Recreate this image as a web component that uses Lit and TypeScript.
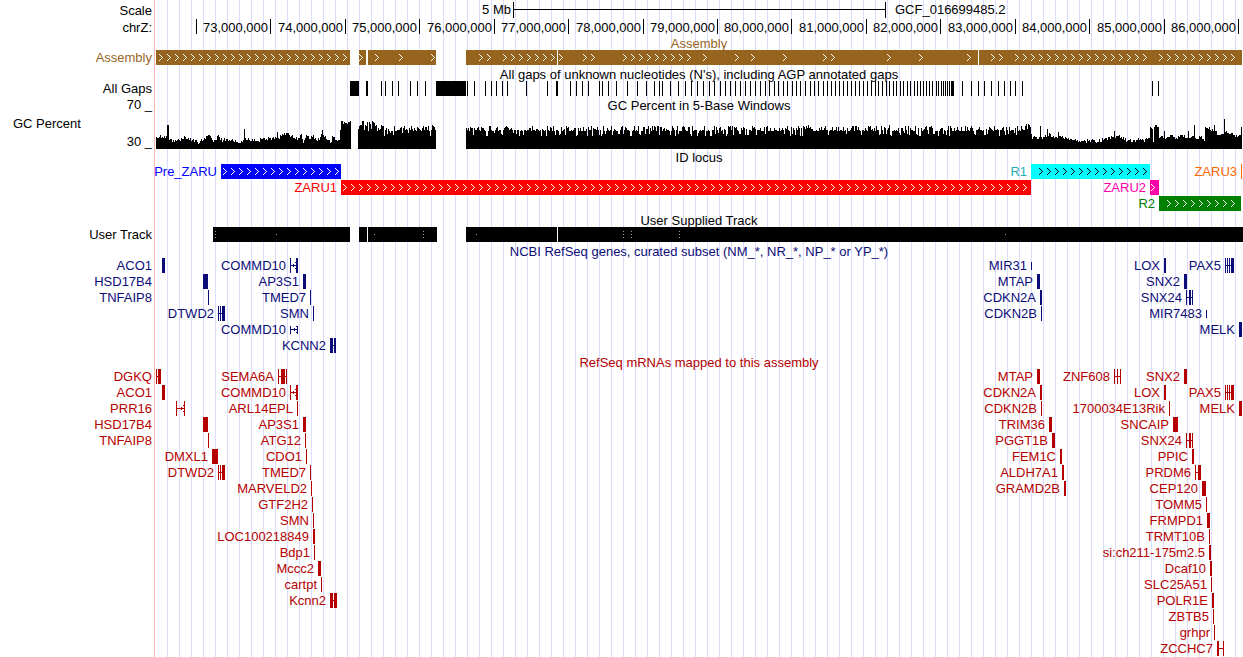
import { LitElement, html, svg, css, nothing } from "lit";
import { customElement, property } from "lit/decorators.js";
import { styleMap } from "lit/directives/style-map.js";

/* The visible window of the chromosome, in bins. */
const VIEW_START = 155;
const VIEW_SPAN = 1088;
const ARROW_STEP = 8;
const ARROW_PHASE = 159;

type Block = [start: number, width: number];

interface Feature {
  name: string;
  blocks: Block[];
  color?: string;
  labelColor?: string;
  arrows?: number[];
  arrowColor?: string;
  gutter?: boolean;
  /** Non-coding items are drawn at half height. */
  thin?: boolean;
  /** Intron strand mark, pointing left. */
  reverse?: number;
}

const percent = (x: number) => `${((x - VIEW_START) / VIEW_SPAN) * 100}%`;

/** Arrow positions on the common arrow grid between two bins, inclusive. */
const arrowsBetween = (from: number, to: number): number[] => {
  const out: number[] = [];
  let x = ARROW_PHASE + Math.ceil((from - ARROW_PHASE) / ARROW_STEP) * ARROW_STEP;
  for (; x <= to; x += ARROW_STEP) out.push(x);
  return out;
};

const f = (name: string, blocks: Block[], extra: Partial<Feature> = {}): Feature => ({
  name,
  blocks,
  ...extra,
});
const left = { gutter: true };

/* ---------- data ---------- */

const ASSEMBLY: Block[] = [[156, 194], [359, 7], [368, 68], [466, 91], [558, 420], [979, 263]];
const ASSEMBLY_ARROWS = [
  ...arrowsBetween(159, 343), 359, 375, 399, 431, 479, 487,
  ...arrowsBetween(503, 551), 559, 583, 591,
  ...arrowsBetween(623, 687), 703, 735, 751, 783, 823, 831, 887, 919, 967, 991, 999,
  ...arrowsBetween(1015, 1143), ...arrowsBetween(1159, 1231),
];

const GAP_BLOCKS: Block[] = [[350, 9], [366, 2], [436, 30], [556, 2], [951, 3]];
const GAPS = [
  381, 385, 392, 398, 410, 417, 425, 467, 474, 485, 491, 496, 502, 507, 526, 547, 570, 576, 582,
  588, 599, 602, 608, 616, 627, 637, 646, 654, 659, 662, 670, 678, 685, 691, 697, 703, 709, 714,
  720, 725, 730, 735, 740, 745, 750, 755, 760, 765, 769, 774, 778, 783, 787, 792, 796, 800, 805,
  810, 814, 818, 823, 827, 831, 835, 839, 843, 847, 851, 855, 859, 863, 867, 871, 875, 878, 882,
  886, 889, 893, 896, 900, 903, 907, 910, 914, 917, 920, 923, 926, 929, 932, 936, 938, 941, 943,
  945, 947, 949, 962, 971, 978, 984, 991, 998, 1004, 1010, 1015, 1022, 1152, 1158,
];

/* GC curve: control points of the sparse regions, as [bin, height]. */
const GC_LEFT: Block[] = [
  [156, 12], [160, 14], [163, 11], [166, 13], [167, 24], [168, 24], [169, 9], [176, 8], [182, 10],
  [184, 13], [186, 10], [192, 9], [197, 7], [203, 9], [206, 13], [210, 13], [213, 7], [216, 9],
  [218, 14], [220, 9], [227, 10], [236, 7], [243, 9], [244, 20], [245, 11], [249, 9], [255, 8],
  [262, 10], [270, 11], [276, 11], [277, 17], [278, 11], [281, 13], [287, 16], [290, 12],
  [298, 11], [301, 15], [303, 6], [306, 14], [309, 10], [313, 14], [314, 10], [319, 9],
  [322, 19], [323, 14], [326, 10], [331, 7], [332, 13], [335, 9], [339, 9], [340, 19],
  [341, 28], [343, 25], [346, 26], [350, 28],
];
const GC_RIGHT: Block[] = [
  [1025, 23], [1026, 25], [1027, 20], [1028, 25], [1030, 22], [1032, 10], [1039, 12], [1040, 23],
  [1041, 12], [1046, 12], [1047, 20], [1048, 13], [1049, 16], [1051, 12], [1057, 11], [1058, 17],
  [1059, 13], [1067, 10], [1074, 9], [1080, 7], [1093, 9], [1097, 7], [1103, 9], [1113, 12],
  [1114, 18], [1115, 11], [1121, 12], [1127, 8], [1136, 9], [1143, 9], [1149, 11], [1150, 22],
  [1152, 20], [1153, 7], [1154, 22], [1158, 22], [1159, 11], [1163, 11], [1164, 18], [1165, 10],
  [1171, 14], [1176, 11], [1182, 14], [1187, 11], [1188, 18], [1189, 11], [1193, 13], [1194, 24],
  [1195, 11], [1200, 12], [1204, 8], [1205, 22], [1209, 22], [1211, 18], [1213, 18], [1214, 24],
  [1215, 18], [1218, 14], [1223, 15], [1224, 30], [1225, 17], [1233, 14], [1238, 13], [1240, 14],
  [1241, 22],
];

const LOCI: Feature[][] = [
  [
    f("Pre_ZARU", [[221, 120]], { color: "#0000ff", arrows: arrowsBetween(223, 335) }),
    f("R1", [[1031, 119]], {
      color: "#00ffff", labelColor: "#1fb0b0", arrowColor: "#000000",
      arrows: arrowsBetween(1039, 1143),
    }),
    f("ZARU3", [[1241, 1]], { color: "#ff6600" }),
  ],
  [
    f("ZARU1", [[341, 690]], { color: "#ff0000", arrows: arrowsBetween(343, 1025) }),
    f("ZARU2", [[1150, 9]], { color: "#ff00aa", arrows: [1151] }),
  ],
  [f("R2", [[1159, 82]], { color: "#008000", arrows: arrowsBetween(1167, 1231) })],
];

const USER_BLOCKS: Block[] = [[213, 137], [359, 8], [368, 69], [466, 91], [558, 685]];
const USER_MARKS: [number, number[]][] = [
  [215, [4, 7, 10]], [276, [7]], [374, [7]], [423, [4, 7, 10]], [476, [7]],
  [623, [4, 7, 10]], [631, [4, 7, 10]], [679, [4, 7, 10]], [1005, [7]],
];

const COMMD10 = f("COMMD10", [[290, 1], [296, 2]], { reverse: 292 });
const PAX5 = f("PAX5", [[1225, 1], [1227, 1], [1229, 1], [1231, 3]]);
const SNX24 = f("SNX24", [[1186, 1], [1189, 2], [1192, 1]]);
const DTWD2 = f("DTWD2", [[218, 1], [220, 1], [222, 3]]);

const CURATED: Feature[][] = [
  [f("ACO1", [[162, 3]], left), COMMD10, f("MIR31", [[1031, 1]], { thin: true }), f("LOX", [[1164, 2]]), PAX5],
  [f("HSD17B4", [[203, 5]], left), f("AP3S1", [[303, 3]]), f("MTAP", [[1037, 3]]), f("SNX2", [[1184, 3]])],
  [f("TNFAIP8", [[208, 1]], left), f("TMED7", [[310, 1]]), f("CDKN2A", [[1040, 2]]), SNX24],
  [DTWD2, f("SMN", [[313, 1]]), f("CDKN2B", [[1041, 1]]), f("MIR7483", [[1206, 1]], { thin: true })],
  [f("COMMD10", [[290, 1], [297, 1]], { reverse: 293, thin: true }), f("MELK", [[1239, 3]])],
  [f("KCNN2", [[330, 3], [334, 2]])],
];

const MAPPED: Feature[][] = [
  [
    f("DGKQ", [[156, 1], [158, 3]], left), f("SEMA6A", [[278, 1], [281, 4], [286, 1]]),
    f("MTAP", [[1037, 3]]), f("ZNF608", [[1114, 1], [1117, 1], [1120, 1]]), f("SNX2", [[1184, 3]]),
  ],
  [f("ACO1", [[162, 3]], left), COMMD10, f("CDKN2A", [[1040, 2]]), f("LOX", [[1164, 2]]), PAX5],
  [
    f("PRR16", [[176, 1], [184, 1]], { gutter: true, reverse: 180 }), f("ARL14EPL", [[297, 1]]),
    f("CDKN2B", [[1041, 1]]), f("1700034E13Rik", [[1169, 1]]), f("MELK", [[1239, 3]]),
  ],
  [f("HSD17B4", [[203, 5]], left), f("AP3S1", [[303, 3]]), f("TRIM36", [[1049, 3]]), f("SNCAIP", [[1173, 5]])],
  [f("TNFAIP8", [[208, 1]], left), f("ATG12", [[305, 1]]), f("PGGT1B", [[1052, 3]]), SNX24],
  [f("DMXL1", [[212, 6]]), f("CDO1", [[306, 1]]), f("FEM1C", [[1060, 2]]), f("PPIC", [[1192, 2]])],
  [DTWD2, f("TMED7", [[310, 1]]), f("ALDH7A1", [[1062, 2]]), f("PRDM6", [[1195, 1], [1198, 3]])],
  [f("MARVELD2", [[311, 1]]), f("GRAMD2B", [[1064, 2]]), f("CEP120", [[1202, 4]])],
  [f("GTF2H2", [[312, 1]]), f("TOMM5", [[1206, 1]])],
  [f("SMN", [[313, 1]]), f("FRMPD1", [[1207, 3]])],
  [f("LOC100218849", [[313, 2]]), f("TRMT10B", [[1209, 1]])],
  [f("Bdp1", [[314, 1]]), f("si:ch211-175m2.5", [[1209, 2]])],
  [f("Mccc2", [[318, 3]]), f("Dcaf10", [[1210, 2]])],
  [f("cartpt", [[321, 1]]), f("SLC25A51", [[1211, 1]])],
  [f("Kcnn2", [[330, 3], [334, 3]]), f("POLR1E", [[1212, 2]])],
  [f("ZBTB5", [[1213, 1]])],
  [f("grhpr", [[1214, 1]])],
  [f("ZCCHC7", [[1217, 2], [1223, 1]])],
];

const TICK_START = 196;
const TICK_STEP = 1042 / 14;
const TICKS = Array.from({ length: 15 }, (_, i) => ({
  at: Math.round(TICK_START + i * TICK_STEP),
  label: i ? `${72 + i},000,000` : "",
}));

/* ---------- drawing ---------- */

const noise = (x: number) => {
  const v = Math.sin(x * 127.1) * 43758.5453;
  return v - Math.floor(v);
};

/** Column path of a curve that runs through the control points. */
const curvePath = (points: Block[]): string => {
  let d = "";
  for (let i = 0; i < points.length; i++) {
    const [x0, h0] = points[i];
    const [x1, h1] = points[i + 1] ?? [x0 + 1, h0];
    for (let x = x0; x < x1; x++) {
      const mix = h0 + ((h1 - h0) * (x - x0)) / (x1 - x0);
      const h = Math.round(mix + (x === x0 ? 0 : (noise(x) - 0.5) * 4));
      d += `M${x} 37v-${h}h1V37z`;
    }
  }
  return d;
};

/** Column path of the dense, evenly noisy part of the curve. */
const densePath = (from: number, to: number, lift: (x: number) => number = () => 0): string => {
  let d = "";
  for (let x = from; x < to; x++) {
    const r = noise(x);
    const h = r < 0.16 ? 13 + Math.round(r * 18) : r > 0.6 ? 20 + Math.round((r - 0.6) * 9) : 17 + Math.round(r * 4);
    d += `M${x} 37v-${h + Math.round(lift(x))}h1V37z`;
  }
  return d;
};

const GC_PATH =
  curvePath(GC_LEFT) +
  densePath(358, 436, (x) => (x < 377 ? 5 : 0)) +
  densePath(466, 1025) +
  curvePath(GC_RIGHT);

const blocksPath = (blocks: Block[], top = 0, height = 15): string =>
  blocks.map(([x, w]) => `M${x} ${top}h${w}v${height}h-${w}z`).join("");

/** Stepped chevrons, one dot per row. */
const arrowsPath = (xs: number[]): string =>
  xs
    .map((x) => [0, 1, 2, 3, 2, 1, 0].map((dx, row) => `M${x + dx} ${4 + row}h1v1h-1z`).join(""))
    .join("");

const reversePath = (x: number): string =>
  [3, 2, 1, 0, 1, 2, 3].map((dx, row) => (row % 2 ? "" : `M${x + dx} ${4 + row}h1v1h-1z`)).join("") +
  `M${x} 7h1v1h-1zM${x + 1} 6h1v1h-1zM${x + 1} 8h1v1h-1z`;

const canvas = (height: number, content: unknown) => html`<svg
  class="canvas"
  viewBox="${VIEW_START} 0 ${VIEW_SPAN} ${height}"
  height=${height}
  preserveAspectRatio="none"
  aria-hidden="true"
>${content}</svg>`;

const drawFeature = (ft: Feature) => {
  const color = ft.color ?? "currentColor";
  const first = ft.blocks[0][0];
  const [lx, lw] = ft.blocks[ft.blocks.length - 1];
  return svg`
    <path class="crisp" fill=${color} d=${blocksPath(ft.blocks, ft.thin ? 4 : 0, ft.thin ? 8 : 15)}></path>
    ${ft.blocks.length > 1
      ? svg`<path class="crisp" fill=${color} d="M${first} 7H${lx + lw}v1H${first}z"></path>`
      : nothing}
    ${ft.reverse
      ? svg`<path class="crisp" fill=${color} d=${reversePath(ft.reverse)}></path>`
      : nothing}
    ${ft.arrows
      ? svg`<path class="crisp" fill=${ft.arrowColor ?? "#ffffff"} d=${arrowsPath(ft.arrows)}></path>`
      : nothing}`;
};

const trackStyles = css`
  .lane {
    display: flex;
    height: 16px;
    line-height: 15px;
  }
  .gutter {
    flex: none;
    box-sizing: border-box;
    width: 155px;
    padding-right: 3px;
    text-align: right;
  }
  .plot {
    position: relative;
    flex: 1;
    min-width: 0;
  }
  .canvas {
    display: block;
    width: 100%;
  }
  .crisp {
    shape-rendering: crispEdges;
  }
  .title {
    margin: 0 0 0 155px;
    font: inherit;
    line-height: 17px;
    height: 15px;
    text-align: center;
    white-space: nowrap;
  }
  .label {
    position: absolute;
    top: 0;
    padding-right: 4px;
    white-space: nowrap;
  }
`;

@customElement("feature-track")
export class FeatureTrack extends LitElement {
  @property() heading = "";
  @property({ attribute: false }) rows: Feature[][] = [];

  static styles = [
    trackStyles,
    css`
      :host {
        display: block;
      }
    `,
  ];

  render() {
    return html`
      <h2 class="title">${this.heading}</h2>
      ${this.rows.map(
        (row) => html`<div class="lane">
          <div class="gutter">${row.filter((x) => x.gutter).map((x) => x.name)}</div>
          <div class="plot">
            ${canvas(15, row.map(drawFeature))}
            ${row
              .filter((x) => !x.gutter)
              .map((x) => {
                const style: Record<string, string> = {
                  right: `calc(100% - ${percent(x.blocks[0][0])})`,
                };
                const tint = x.labelColor ?? x.color;
                if (tint) style.color = tint;
                return html`<span class="label" style=${styleMap(style)}>${x.name}</span>`;
              })}
          </div>
        </div>`
      )}
    `;
  }
}

@customElement("app-root")
export class AppRoot extends LitElement {
  static styles = [
    trackStyles,
    css`
      :host {
        display: block;
        position: relative;
        overflow: hidden;
        background: #ffffff;
        color: #000000;
        font-family: "Liberation Sans", Arial, Helvetica, sans-serif;
        font-size: 13px;
      }
      .guides {
        position: absolute;
        inset: 0 0 0 154px;
        border-left: 1px solid #ffb4b4;
      }
      .guides::after {
        content: "";
        position: absolute;
        inset: 0 0 0 12px;
        background: repeating-linear-gradient(to right, #dcdcff 0 1px, transparent 1px 12px);
      }
      .tracks {
        position: relative;
      }
      .scale {
        height: 19px;
        line-height: 19px;
      }
      .ruler {
        line-height: 17px;
      }
      .scale .gutter {
        padding-top: 1px;
      }
      .tick-label {
        padding-right: 2px;
      }
      .assembly {
        color: #96641e;
      }
      .curated {
        color: #0c0c78;
      }
      .mapped {
        color: #b40000;
      }
      .gc {
        display: flex;
        height: 52px;
        line-height: 15px;
      }
      .gc .gutter {
        display: flex;
        align-items: center;
        justify-content: space-between;
        padding-left: 13px;
      }
      .gc-axis {
        display: flex;
        flex-direction: column;
        justify-content: space-between;
        height: 52px;
      }
      .gc .title {
        margin-left: 0;
      }
    `,
  ];

  render() {
    return html`
      <div class="guides"></div>
      <main class="tracks">
        <div class="lane scale">
          <div class="gutter">Scale</div>
          <div class="plot">
            ${canvas(19, svg`<path class="crisp" d="M513 2h1v7h371v-7h1v16h-1v-8H514v8h-1z"></path>`)}
            <span class="label tick-label" style=${styleMap({ right: `calc(100% - ${percent(513)})` })}>5 Mb</span>
            <span class="label" style=${styleMap({ left: percent(895) })}>GCF_016699485.2</span>
          </div>
        </div>
        <div class="lane ruler">
          <div class="gutter">chrZ:</div>
          <div class="plot">
            ${canvas(15, svg`<path class="crisp" d=${blocksPath(TICKS.map((t) => [t.at, 1] as Block))}></path>`)}
            ${TICKS.filter((t) => t.label).map(
              (t) => html`<span
                class="label tick-label"
                style=${styleMap({ right: `calc(100% - ${percent(t.at)})` })}
              >${t.label}</span>`
            )}
          </div>
        </div>

        <section class="assembly">
          <h2 class="title">Assembly</h2>
          <div class="lane">
            <div class="gutter">Assembly</div>
            <div class="plot">
              ${canvas(
                15,
                svg`<path class="crisp" fill="#ffffff" d="M557 0h1v15h-1zM978 0h1v15h-1z"></path>
                  <path class="crisp" fill="currentColor" d=${blocksPath(ASSEMBLY)}></path>
                  <path class="crisp" fill="#ffffff" d=${arrowsPath(ASSEMBLY_ARROWS)}></path>`
              )}
            </div>
          </div>
        </section>

        <section>
          <h2 class="title">All gaps of unknown nucleotides (N's), including AGP annotated gaps</h2>
          <div class="lane">
            <div class="gutter">All Gaps</div>
            <div class="plot">
              ${canvas(
                15,
                svg`<path class="crisp" d=${blocksPath([...GAP_BLOCKS, ...GAPS.map((x) => [x, 1] as Block)])}></path>`
              )}
            </div>
          </div>
        </section>

        <section class="gc">
          <div class="gutter">
            <span>GC Percent</span>
            <div class="gc-axis"><span>70 _</span><span>30 _</span></div>
          </div>
          <div class="plot">
            <h2 class="title">GC Percent in 5-Base Windows</h2>
            ${canvas(37, svg`<path class="crisp" d=${GC_PATH}></path>`)}
          </div>
        </section>

        <feature-track heading="ID locus" .rows=${LOCI}></feature-track>

        <section>
          <h2 class="title">User Supplied Track</h2>
          <div class="lane">
            <div class="gutter">User Track</div>
            <div class="plot">
              ${canvas(
                15,
                svg`<path class="crisp" fill="#ffffff" d="M367 0h1v15h-1zM557 0h1v15h-1z"></path>
                  <path class="crisp" d=${blocksPath(USER_BLOCKS)}></path>
                  <path class="crisp" fill="#a0a0a0"
                    d=${USER_MARKS.map(([x, ys]) => ys.map((y) => blocksPath([[x, 1]], y, 1)).join("")).join("")}></path>`
              )}
            </div>
          </div>
        </section>

        <feature-track
          class="curated"
          heading="NCBI RefSeq genes, curated subset (NM_*, NR_*, NP_* or YP_*)"
          .rows=${CURATED}
        ></feature-track>
        <feature-track
          class="mapped"
          heading="RefSeq mRNAs mapped to this assembly"
          .rows=${MAPPED}
        ></feature-track>
      </main>
    `;
  }
}
